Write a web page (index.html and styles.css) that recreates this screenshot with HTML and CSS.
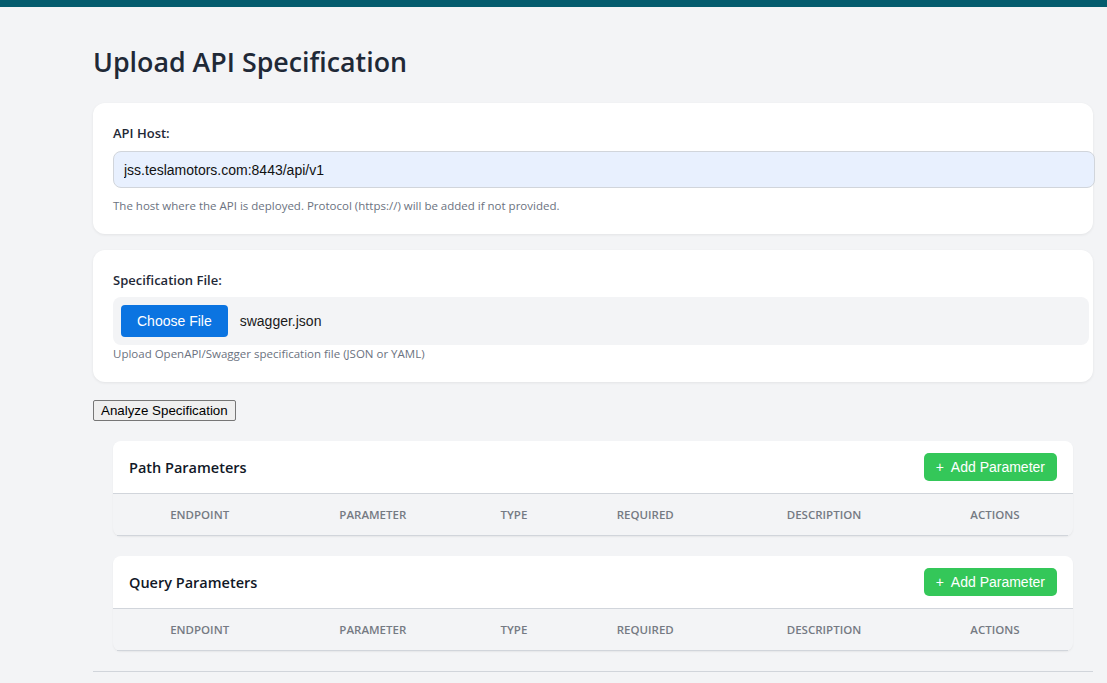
FILE: index.html
```html
<!DOCTYPE html>
<html lang="en">
<head>
<meta charset="utf-8">
<title>Upload API Specification</title>
<link rel="stylesheet" href="styles.css">
</head>
<body>
<div class="topbar"></div>
<main class="container">
  <h1 class="page-title">Upload API Specification</h1>

  <div class="card">
    <label class="field-label" for="host">API Host:</label>
    <input class="text-input" id="host" type="text" value="jss.teslamotors.com:8443/api/v1">
    <p class="help">The host where the API is deployed. Protocol (https://) will be added if not provided.</p>
  </div>

  <div class="card">
    <div class="field-label field-label-file">Specification File:</div>
    <div class="file-box">
      <span class="file-btn">Choose File</span>
      <span class="file-name">swagger.json</span>
    </div>
    <p class="help help-tight">Upload OpenAPI/Swagger specification file (JSON or YAML)</p>
  </div>

  <button class="analyze-btn" type="button">Analyze Specification</button>

  <div class="results">
    <section class="param-card">
      <div class="param-head">
        <h2 class="param-title">Path Parameters</h2>
        <button class="add-btn" type="button">+&nbsp; Add Parameter</button>
      </div>
      <table class="param-table">
        <thead>
          <tr><th>Endpoint</th><th>Parameter</th><th>Type</th><th>Required</th><th>Description</th><th>Actions</th></tr>
        </thead>
      </table>
    </section>

    <section class="param-card">
      <div class="param-head">
        <h2 class="param-title">Query Parameters</h2>
        <button class="add-btn" type="button">+&nbsp; Add Parameter</button>
      </div>
      <table class="param-table">
        <thead>
          <tr><th>Endpoint</th><th>Parameter</th><th>Type</th><th>Required</th><th>Description</th><th>Actions</th></tr>
        </thead>
      </table>
    </section>
  </div>

  <div class="divider"></div>
</main>
</body>
</html>
```

FILE: styles.css
```css
* { box-sizing: border-box; }

html, body {
  margin: 0;
  padding: 0;
  background: #f3f4f6;
  font-family: "Open Sans", "Noto Sans", sans-serif;
  color: #1f2937;
}

.topbar {
  height: 7px;
  background: #055c6e;
}

.container {
  width: 1000px;
  margin: 0 0 0 93px;
  padding-top: 37px;
}

.page-title {
  margin: 0 0 23px 0;
  font-size: 26.8px;
  line-height: 36px;
  font-weight: 600;
  color: #1f2937;
}

.card {
  background: #ffffff;
  border-radius: 12px;
  box-shadow: 0 1px 3px rgba(0, 0, 0, 0.07);
  padding: 20px;
  margin-bottom: 16px;
}

.field-label {
  display: block;
  font-size: 13px;
  line-height: 20px;
  font-weight: 600;
  color: #1f2937;
  margin-bottom: 8px;
}

.field-label-file {
  margin-bottom: 7px;
}

.text-input {
  box-sizing: content-box;
  display: block;
  width: 100%;
  height: 17px;
  padding: 9px 10px;
  border: 1px solid #d1d5db;
  border-radius: 8px;
  background: #e8f0fe;
  font-family: "Liberation Sans", Arial, sans-serif;
  font-size: 14px;
  color: #111111;
  outline: none;
}

.help {
  margin: 10px 0 0 0;
  font-size: 11.5px;
  line-height: 16px;
  color: #6b7280;
}

.help-tight {
  margin-top: 1px;
}

.file-box {
  box-sizing: content-box;
  width: 100%;
  padding: 8px;
  background: #f3f4f6;
  border-radius: 8px;
  display: flex;
  align-items: center;
  gap: 12px;
}

.file-btn {
  display: inline-block;
  height: 32px;
  line-height: 32px;
  padding: 0 16px;
  background: #0b74e1;
  color: #ffffff;
  border-radius: 4px;
  font-family: "Liberation Sans", Arial, sans-serif;
  font-size: 14px;
}

.file-name {
  font-family: "Liberation Sans", Arial, sans-serif;
  font-size: 14px;
  color: #1a1a1a;
}

.analyze-btn {
  display: block;
  margin-top: 18px;
  height: 21px;
  padding: 0 7px;
  font-family: "Liberation Sans", Arial, sans-serif;
  font-size: 13.33px;
  color: #000000;
  background: #efefef;
  border: 1px solid #767676;
  border-radius: 2px;
}

.results {
  padding: 0 20px;
  margin-top: 20px;
}

.param-card {
  border-radius: 8px;
  box-shadow: 0 1px 2px rgba(0, 0, 0, 0.06);
  margin-bottom: 20px;
}

.param-head {
  background: #ffffff;
  border-radius: 8px 8px 0 0;
  border-bottom: 1px solid #d1d5db;
  padding: 12px 16px;
  display: flex;
  align-items: center;
  justify-content: space-between;
}

.param-title {
  margin: 0;
  font-size: 14.5px;
  font-weight: 600;
  color: #111827;
}

.add-btn {
  height: 28px;
  padding: 0 12px;
  background: #34c759;
  color: #ffffff;
  border: none;
  border-radius: 5px;
  font-family: "Liberation Sans", Arial, sans-serif;
  font-size: 14px;
}

.param-table {
  width: calc(100% - 9px);
  margin: 0 5px 0 4px;
  border-collapse: collapse;
}

.param-table th {
  padding: 12px;
  text-align: center;
  font-size: 11.5px;
  line-height: 17px;
  font-weight: 600;
  text-transform: uppercase;
  color: #757a83;
  border-bottom: 1px solid #d1d5db;
}

.divider {
  border-top: 1px solid #d1d5db;
  margin-top: 1px;
}
```
